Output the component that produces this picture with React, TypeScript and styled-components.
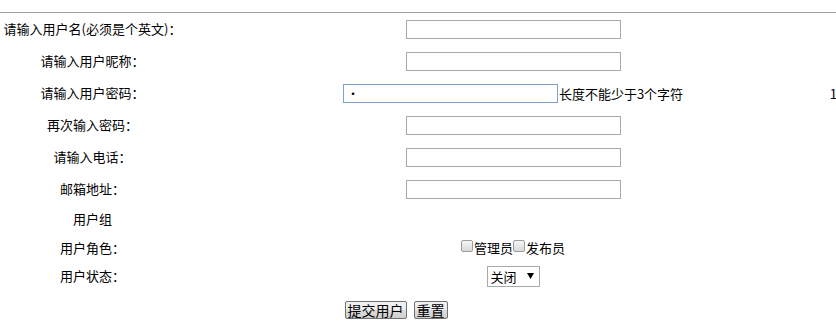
import styled, { createGlobalStyle } from 'styled-components'

const GlobalStyle = createGlobalStyle`
  html, body {
    margin: 0;
    padding: 0;
    overflow: hidden;
    background: #fff;
  }
  body {
    font-family: "Noto Sans CJK SC", "DejaVu Sans", sans-serif;
    font-size: 13px;
    color: #000;
  }
`

const Page = styled.div`
  width: 841px;
  padding-top: 12px;
`

const Rule = styled.div`
  border-top: 1px solid #a0a0a0;
`

const Row = styled.div<{ $h: number }>`
  display: grid;
  grid-template-columns: 185px 656px;
  align-items: center;
  height: ${({ $h }) => $h}px;
`

const Label = styled.div`
  text-align: center;
  white-space: nowrap;
  line-height: 16px;
`

const Field = styled.div`
  display: flex;
  justify-content: center;
  align-items: center;
`

const WideField = styled.div`
  display: grid;
  grid-template-columns: 1fr auto 1fr;
  align-items: center;
`

const Inline = styled.div`
  display: flex;
  align-items: center;
`

const Counter = styled.span`
  justify-self: end;
  padding-right: 4px;
`

const TextInput = styled.input<{ $focused?: boolean }>`
  box-sizing: border-box;
  width: 215px;
  height: 19px;
  margin: 0;
  padding: 0 3px;
  border: 1px solid ${({ $focused }) => ($focused ? '#7fa3cf' : '#a9a9a9')};
  border-radius: 0;
  font-family: inherit;
  font-size: 12px;
  outline: none;
  background: #fff;
`

const Hint = styled.span`
  margin-left: 1px;
  white-space: nowrap;
`

const CheckGroup = styled.div`
  display: flex;
  align-items: center;
`

const CheckBox = styled.span`
  box-sizing: border-box;
  width: 12px;
  height: 12px;
  margin-bottom: 4px;
  border: 1px solid #9c9c9c;
  border-radius: 2px;
  background: linear-gradient(#f6f6f6, #d9d9d9);
`

const CheckText = styled.span`
  margin-left: 1px;
  white-space: nowrap;
`

const SelectBox = styled.div`
  box-sizing: border-box;
  display: flex;
  align-items: center;
  width: 53px;
  height: 21px;
  padding-left: 3px;
  border: 1px solid #a9a9a9;
  background: #fff;
  font-size: 13px;
`

const SelectValue = styled.span`
  flex: 1;
`

const Caret = styled.svg`
  width: 7px;
  height: 6px;
  margin-right: 5px;
`

const ButtonRow = styled.div`
  display: flex;
  justify-content: center;
  gap: 7px;
  width: 792px;
  padding-top: 11px;
`

const Button = styled.button`
  box-sizing: border-box;
  height: 18px;
  margin: 0;
  padding: 0 2px;
  border: 1px solid #707070;
  border-radius: 2px;
  background: linear-gradient(#f2f2f2, #ebebeb 50%, #dddddd 50%, #cfcfcf);
  font-family: inherit;
  font-size: 14px;
  line-height: 14px;
  color: #000;
`

const fields = [
  '请输入用户名(必须是个英文)：',
  '请输入用户昵称：',
]

const lowerFields = ['再次输入密码：', '请输入电话：', '邮箱地址：']

export default function App() {
  return (
    <Page>
      <GlobalStyle />
      <Rule />
      {fields.map((label) => (
        <Row key={label} $h={32}>
          <Label>{label}</Label>
          <Field>
            <TextInput type="text" />
          </Field>
        </Row>
      ))}
      <Row $h={32}>
        <Label>请输入用户密码：</Label>
        <WideField>
          <span />
          <Inline>
            <TextInput type="password" defaultValue="1" $focused />
            <Hint>长度不能少于3个字符</Hint>
          </Inline>
          <Counter>1</Counter>
        </WideField>
      </Row>
      {lowerFields.map((label) => (
        <Row key={label} $h={32}>
          <Label>{label}</Label>
          <Field>
            <TextInput type="text" />
          </Field>
        </Row>
      ))}
      <Row $h={28}>
        <Label>用户组</Label>
        <Field />
      </Row>
      <Row $h={29}>
        <Label>用户角色：</Label>
        <Field>
          <CheckGroup>
            <CheckBox />
            <CheckText>管理员</CheckText>
            <CheckBox />
            <CheckText>发布员</CheckText>
          </CheckGroup>
        </Field>
      </Row>
      <Row $h={28}>
        <Label>用户状态：</Label>
        <Field>
          <SelectBox>
            <SelectValue>关闭</SelectValue>
            <Caret viewBox="0 0 7 6">
              <path d="M0 0h7L3.5 6z" fill="#000" />
            </Caret>
          </SelectBox>
        </Field>
      </Row>
      <ButtonRow>
        <Button type="button">提交用户</Button>
        <Button type="button">重置</Button>
      </ButtonRow>
    </Page>
  )
}
